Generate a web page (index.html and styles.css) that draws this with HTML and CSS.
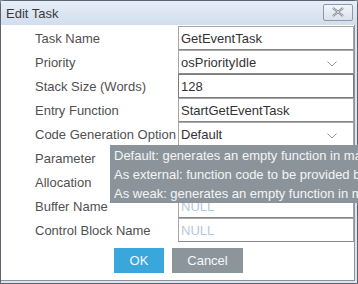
FILE: index.html
```html
<!DOCTYPE html>
<html>
<head>
<meta charset="utf-8">
<link rel="stylesheet" href="styles.css">
</head>
<body>
<div class="window">
  <div class="titlebar">
    <span class="title">Edit Task</span>
    <span class="close"><svg width="14" height="10" viewBox="0 0 14 10"><path d="M2 1 L12 9 M12 1 L2 9" stroke="#6a7480" stroke-width="2.2" fill="none"/><path d="M2 1 L12 9 M12 1 L2 9" stroke="#f4f6f8" stroke-width="0.8" fill="none"/></svg></span>
  </div>
  <div class="content">
    <div class="form">
      <div class="label">Task Name</div>
      <div class="field">GetEventTask</div>
      <div class="label">Priority</div>
      <div class="field select">osPriorityIdle<svg class="chev" width="10" height="6" viewBox="0 0 10 6"><path d="M0.5 0.5 L5 5 L9.5 0.5" stroke="#9a9a9a" fill="none"/></svg></div>
      <div class="label">Stack Size (Words)</div>
      <div class="field focus">128</div>
      <div class="label">Entry Function</div>
      <div class="field">StartGetEventTask</div>
      <div class="label">Code Generation Option</div>
      <div class="field select">Default<svg class="chev" width="10" height="6" viewBox="0 0 10 6"><path d="M0.5 0.5 L5 5 L9.5 0.5" stroke="#9a9a9a" fill="none"/></svg></div>
      <div class="label">Parameter</div>
      <div class="field"></div>
      <div class="label">Allocation</div>
      <div class="field"></div>
      <div class="label">Buffer Name</div>
      <div class="field dim">NULL</div>
      <div class="label">Control Block Name</div>
      <div class="field dim">NULL</div>
    </div>
    <div class="buttons">
      <span class="btn ok">OK</span>
      <span class="btn cancel">Cancel</span>
    </div>
    <div class="tooltip">
      <div>Default: generates an empty function in main.c</div>
      <div>As external: function code to be provided by user</div>
      <div>As weak: generates an empty function in main.c with __weak attribute</div>
    </div>
  </div>
</div>
</body>
</html>
```
FILE: styles.css
```css
html, body {
  margin: 0;
  padding: 0;
  width: 358px;
  height: 284px;
  overflow: hidden;
  background: #8a8f96;
  font-family: "Liberation Sans", Arial, sans-serif;
}
.window {
  width: 358px;
  height: 284px;
  box-sizing: border-box;
  border: 1px solid #5c6470;
  border-radius: 4px 4px 0 0;
  background: #dbe5f1;
  display: flex;
  flex-direction: column;
}
.titlebar {
  height: 24px;
  flex: none;
  display: flex;
  align-items: center;
  justify-content: space-between;
  padding: 0 4px 0 5px;
  background: linear-gradient(#e6eef8, #d2deed);
}
.title {
  font-size: 13px;
  color: #3a3a3a;
}
.close {
  width: 30px;
  height: 17px;
  box-sizing: border-box;
  border: 1px solid #8d99a8;
  border-radius: 2px;
  background: linear-gradient(#f3f6fa, #d9e1eb);
  display: flex;
  align-items: center;
  justify-content: center;
  margin-top: -2px;
}
.content {
  position: relative;
  flex: 1;
  background: #ffffff;
  margin: 0 2px 2px 0;
  border-right: 1px solid #8c939c;
  border-bottom: 1px solid #8c939c;
  padding: 1px 0 0 34px;
  overflow: visible;
}
.form {
  display: grid;
  grid-template-columns: 143px 176px;
  grid-auto-rows: 24px;
}
.label {
  font-size: 13px;
  color: #505050;
  display: flex;
  align-items: center;
  white-space: nowrap;
}
.field {
  height: 24px;
  box-sizing: border-box;
  border: 1px solid #a6a6a6;
  border-bottom-color: #8a8a8a;
  font-size: 13px;
  color: #333;
  display: flex;
  align-items: center;
  padding-left: 2px;
  position: relative;
}
.focus {
  border-color: #7a7a7a;
}
.dim {
  color: #b6c8da;
}
.chev {
  position: absolute;
  right: 16px;
  top: 10px;
}
.buttons {
  display: flex;
  gap: 8px;
  margin: 6px 0 0 79px;
}
.btn {
  height: 25px;
  display: flex;
  align-items: center;
  justify-content: center;
  font-size: 13px;
  color: #f4f8fb;
}
.ok {
  width: 50px;
  background: #39a7dc;
}
.cancel {
  width: 71px;
  background: #8d959c;
}
.tooltip {
  position: absolute;
  left: 109px;
  top: 120px;
  width: 248px;
  height: 58px;
  overflow: hidden;
  background: #8c949b;
  color: #f3f5f6;
  font-size: 13px;
  line-height: 19px;
  padding: 1px 0 0 4px;
  box-sizing: border-box;
  white-space: nowrap;
}
```
